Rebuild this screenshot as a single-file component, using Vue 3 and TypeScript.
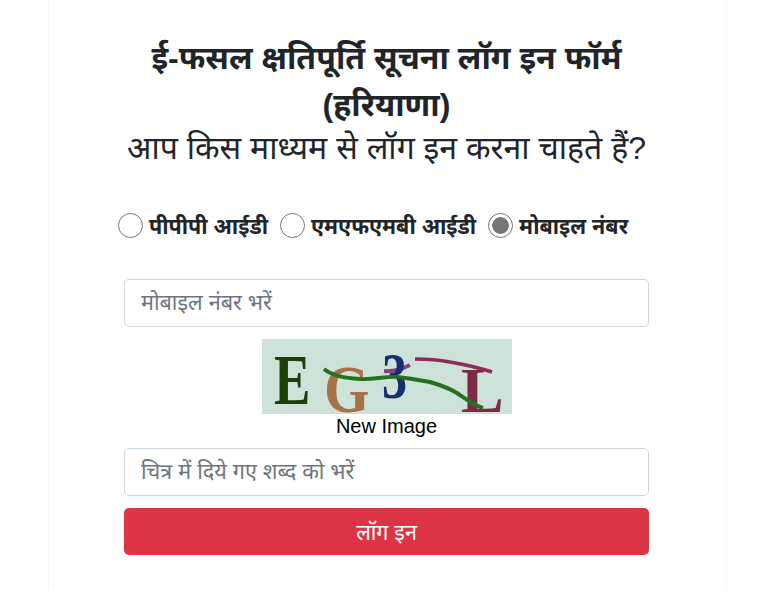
<script setup lang="ts">
import { ref } from 'vue'
const options = ['पीपीपी आईडी', 'एमएफएमबी आईडी', 'मोबाइल नंबर']
const selected = ref(2)
const mobile = ref('')
const word = ref('')
</script>

<template>
  <main class="card">
    <h1 class="title">ई-फसल क्षतिपूर्ति सूचना लॉग इन फॉर्म<br />(हरियाणा)</h1>
    <h2 class="subtitle">आप किस माध्यम से लॉग इन करना चाहते हैं?</h2>
    <div class="radios">
      <label v-for="(o, i) in options" :key="o" class="radio">
        <input v-model="selected" type="radio" name="mode" :value="i" />
        <span>{{ o }}</span>
      </label>
    </div>
    <form class="form" @submit.prevent>
      <input v-model="mobile" class="field" type="text" placeholder="मोबाइल नंबर भरें" />
      <div class="captcha">
        <svg width="250" height="75" viewBox="0 0 250 75" aria-label="captcha">
          <rect width="250" height="75" fill="#cde3da" />
          <text class="c" font-size="72" fill="#1c3f0c" transform="translate(12 65) scale(0.76 1)">E</text>
          <text class="c" font-size="68" fill="#a9704a" transform="translate(62 73) scale(0.86 1)">G</text>
          <path d="M122 32 C132 33 140 30 148 26" stroke="#8f3f86" stroke-width="4" fill="none" />
          <text class="c" font-size="66" fill="#14306e" transform="translate(120 59) scale(0.76 1)">3</text>
          <text class="c" font-size="64" fill="#7c2a45" transform="translate(199 73)">L</text>
          <path d="M153 20 C165 20 178 21 188 23 C205 26 218 29 230 33" stroke="#8c2a5c" stroke-width="3.5" fill="none" />
          <path d="M62 30 C72 38 85 39 98 40 C112 41 122 37 135 38 C146 39 157 41 168 43 C178 46 187 49 195 54 C204 60 212 66 221 69" stroke="#27701f" stroke-width="4" fill="none" />
        </svg>
        <a class="new">New Image</a>
      </div>
      <input v-model="word" class="field" type="text" placeholder="चित्र में दिये गए शब्द को भरें" />
      <button class="submit" type="submit">लॉग इन</button>
    </form>
  </main>
</template>

<style>
html, body { margin: 0; background: #fff; }
</style>

<style scoped>
.card {
  box-sizing: border-box;
  width: 679px;
  height: 591px;
  margin-left: 48px;
  padding: 35px 77px 0 75px;
  border-left: 1px solid #f7f7f7;
  border-right: 1px solid #f7f7f7;
  font-family: "Liberation Sans", "Noto Sans", "Noto Sans Devanagari", sans-serif;
  color: #212529;
  text-align: center;
}
.title {
  margin: 0 -40px;
  font-size: 32px;
  line-height: 47px;
  font-weight: 700;
}
.subtitle {
  margin: 0 -40px;
  font-size: 32px;
  line-height: 38px;
  font-weight: 400;
}
.radios {
  display: flex;
  justify-content: flex-start;
  gap: 12px;
  margin: 39px -20px 0 -6px;
  height: 38px;
  align-items: center;
}
.radio {
  display: flex;
  align-items: center;
  gap: 6px;
  font-size: 21.5px;
  font-weight: 700;
}
.radio input {
  appearance: none;
  box-sizing: border-box;
  width: 25px;
  height: 25px;
  margin: 0;
  border: 1px solid #767676;
  border-radius: 50%;
  background: #fff;
}
.radio input:checked {
  background: radial-gradient(circle, #767676 0 8px, #fff 8.6px);
}
.form {
  display: flex;
  flex-direction: column;
  margin-top: 35px;
}
.field {
  box-sizing: border-box;
  width: 525px;
  height: 48px;
  padding: 6px 16px;
  border: 1px solid #ced4da;
  border-radius: 5px;
  font: inherit;
  font-size: 21.6px;
  color: #495057;
  background: #fff;
}
.field::placeholder { color: #6c757d; opacity: 1; }
.captcha {
  display: flex;
  flex-direction: column;
  align-items: center;
  margin: 12px 0 10px;
}
.captcha svg { display: block; }
.c { font-family: "Liberation Serif", serif; font-weight: 700; }
.new {
  font-size: 20px;
  line-height: 24px;
  color: #000;
}
.submit {
  height: 47px;
  margin-top: 12px;
  border: 0;
  border-radius: 5px;
  background: #dc3545;
  color: #fff;
  font: inherit;
  font-size: 21.5px;
}
</style>
